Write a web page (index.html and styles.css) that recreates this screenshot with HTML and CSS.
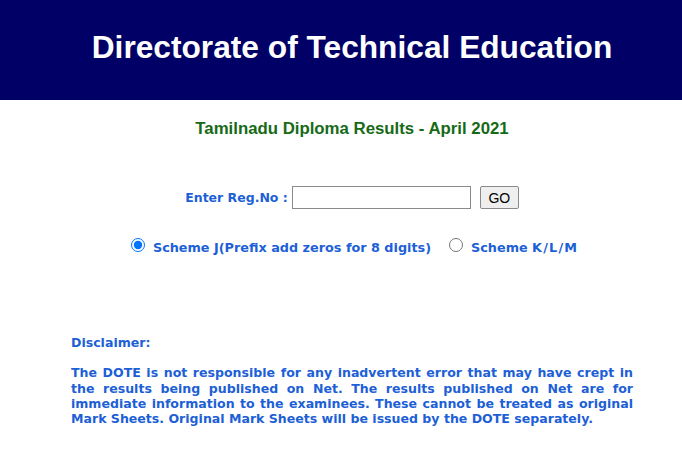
FILE: index.html
```html
<!DOCTYPE html>
<html>
<head>
<meta charset="utf-8">
<link rel="stylesheet" href="styles.css">
</head>
<body>
<header class="banner">
  <h1 class="title">Directorate of Technical Education</h1>
</header>
<main class="content">
  <h2 class="subtitle">Tamilnadu Diploma Results - April 2021</h2>
  <form class="regform">
    <div class="row">
      <label class="label" for="reg">Enter Reg.No :</label>
      <input class="reginput" id="reg" type="text">
      <button class="go" type="button">GO</button>
    </div>
    <div class="schemes">
      <label class="scheme"><input type="radio" name="s" checked><span>Scheme J(Prefix add zeros for 8 digits)</span></label>
      <label class="scheme"><input type="radio" name="s"><span>Scheme K<span class="sl">/</span>L<span class="sl">/</span>M</span></label>
    </div>
  </form>
  <section class="disclaimer">
    <p class="dtitle">Disclaimer:</p>
    <p class="dtext">The DOTE is not responsible for any inadvertent error that may have crept in the results being published on Net. The results published on Net are for immediate information to the examinees. These cannot be treated as original Mark Sheets. Original Mark Sheets will be issued by the DOTE separately.</p>
  </section>
</main>
</body>
</html>
```
FILE: styles.css
```css
html, body {
  margin: 0;
  padding: 0;
  background: #ffffff;
}
body {
  font-family: "DejaVu Sans", Verdana, sans-serif;
}
.banner {
  background: #000066;
  height: 100px;
  box-sizing: border-box;
  padding: 0 49px 6px 71px;
  display: flex;
  align-items: center;
}
.title {
  margin: 0;
  width: 562px;
  text-align: center;
  color: #ffffff;
  font-family: "Liberation Sans", Arial, sans-serif;
  font-weight: bold;
  font-size: 31.7px;
}
.content {
  width: 562px;
  margin-left: 71px;
}
.subtitle {
  margin: 19px 0 0;
  text-align: center;
  color: #166a16;
  font-family: "Liberation Sans", Arial, sans-serif;
  font-weight: bold;
  font-size: 16.8px;
  line-height: 19px;
}
.regform {
  margin-top: 48px;
}
.row {
  display: flex;
  justify-content: center;
  align-items: center;
}
.label {
  color: #1d5fd6;
  font-weight: bold;
  font-size: 12.5px;
  margin-right: 4px;
}
.reginput {
  box-sizing: border-box;
  width: 179px;
  height: 23px;
  margin: 0 9px 0 0;
  border: 1px solid #8a8a8a;
  padding: 1px 2px;
}
.go {
  box-sizing: border-box;
  width: 39px;
  height: 23px;
  margin: 0;
  padding: 0;
  font-family: "Liberation Sans", Arial, sans-serif;
  font-size: 14px;
  color: #000;
  background: #efefef;
  border: 1px solid #8a8a8a;
  border-radius: 2px;
}
.schemes {
  margin-top: 29px;
  display: flex;
  justify-content: center;
  align-items: center;
  gap: 18px;
  padding-left: 4px;
}
.scheme {
  display: flex;
  align-items: center;
  color: #1d5fd6;
  font-weight: bold;
  font-size: 12.8px;
}
.sl {
  padding: 0 1.2px;
}
.scheme input {
  margin: 0 8px 5px 0;
  width: 14px;
  height: 14px;
}
.disclaimer {
  margin-top: 78px;
  color: #1d5fd6;
  font-weight: bold;
  font-size: 12.55px;
  line-height: 15.33px;
}
.dtitle {
  margin: 0;
}
.dtext {
  margin: 15px 0 0;
  text-align: justify;
}
```
